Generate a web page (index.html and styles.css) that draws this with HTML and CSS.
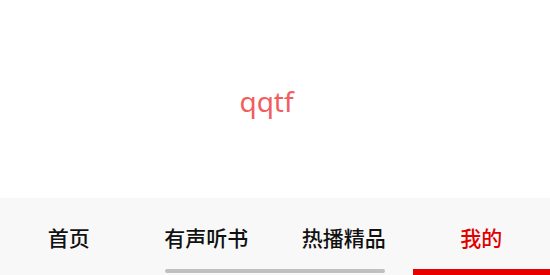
FILE: index.html
```html
<!DOCTYPE html>
<html lang="zh">
<head>
<meta charset="utf-8">
<link rel="stylesheet" href="styles.css">
</head>
<body>
<div class="app">
  <main class="content">
    <span class="title">qqtf</span>
  </main>
  <nav class="tabbar">
    <div class="tab">首页</div>
    <div class="tab">有声听书</div>
    <div class="tab">热播精品</div>
    <div class="tab active">我的</div>
    <div class="scrollbar"></div>
  </nav>
</div>
</body>
</html>
```
FILE: styles.css
```css
html, body {
  margin: 0;
  padding: 0;
  background: #ffffff;
}
.app {
  width: 550px;
  height: 275px;
  display: flex;
  flex-direction: column;
  font-family: "Noto Sans CJK SC", "Noto Sans", sans-serif;
}
.content {
  height: 198px;
  display: flex;
  align-items: center;
  justify-content: center;
  padding-right: 17px;
  box-sizing: border-box;
}
.title {
  color: #f25d5d;
  font-family: "Noto Sans", "Open Sans", sans-serif;
  font-size: 28px;
  margin-top: 4px;
}
.tabbar {
  position: relative;
  flex: 1;
  display: flex;
  background: #f8f8f8;
}
.tab {
  flex: 1;
  display: flex;
  align-items: center;
  justify-content: center;
  font-size: 21px;
  font-weight: 500;
  color: #111111;
  box-sizing: border-box;
  padding-top: 7px;
  border-bottom: 6px solid transparent;
}
.tab.active {
  color: #e00000;
  border-bottom-color: #e80000;
}
.scrollbar {
  position: absolute;
  left: 165px;
  width: 220px;
  bottom: 2px;
  height: 4px;
  border-radius: 2px;
  background: #c0c0c0;
}
```
